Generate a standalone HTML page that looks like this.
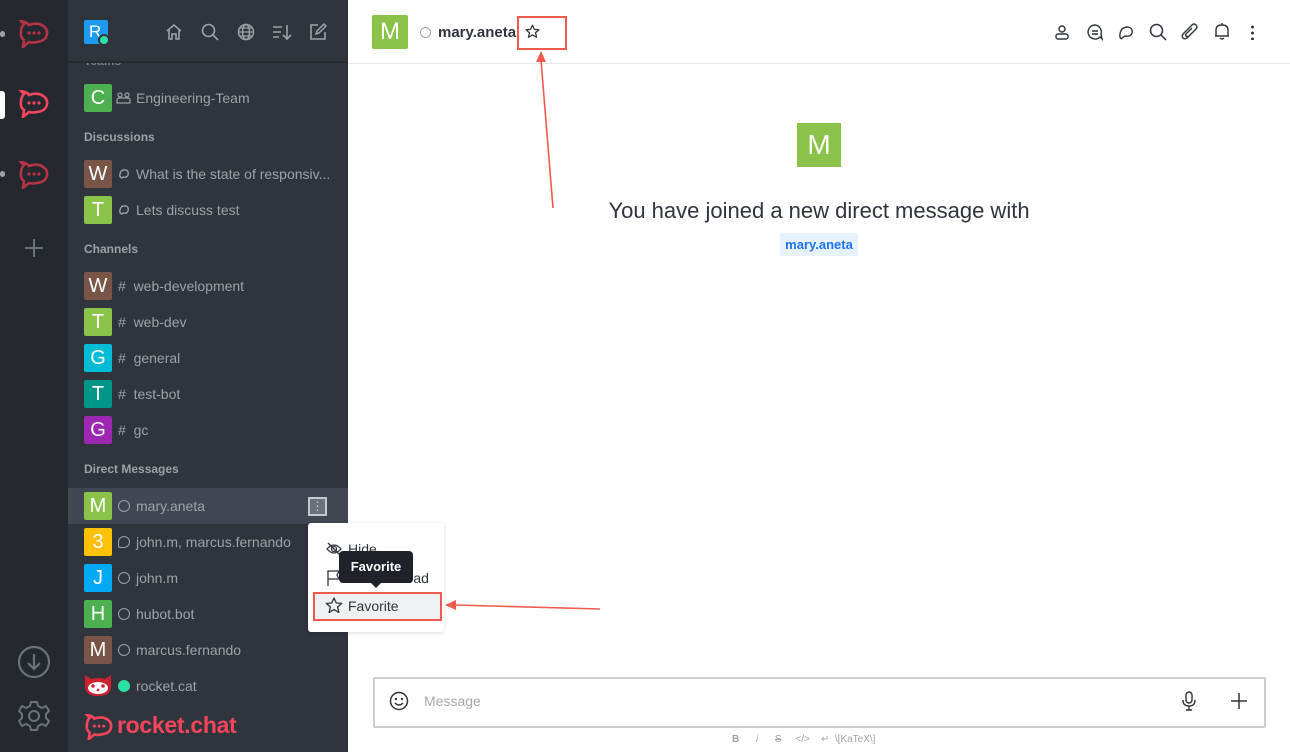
<!DOCTYPE html>
<html><head><meta charset="utf-8"><style>
*{box-sizing:border-box;margin:0;padding:0}
body{width:1290px;height:752px;overflow:hidden;font-family:"Liberation Sans",sans-serif;background:#fff;position:relative}
.a{position:absolute}
#rail{left:0;top:0;width:68px;height:752px;background:#25282f}
#side{left:68px;top:0;width:280px;height:752px;background:#2f343d}
#shead{left:68px;top:0;width:280px;height:63px;background:#2f343d;border-bottom:2px solid #272b31}
.lbl{position:absolute;left:84px;font-size:12px;font-weight:bold;color:#9ea2a8}
.row{position:absolute;left:68px;width:280px;height:36px}
.av{position:absolute;left:16px;top:4px;width:28px;height:28px;border-radius:2px;color:#fff;font-size:20px;text-align:center;line-height:28px}
.nm{position:absolute;left:68px;top:0;line-height:36px;font-size:14px;color:#9ea2a8;white-space:nowrap}
.ic{position:absolute;left:50px;top:12px;width:12px;height:12px}
.circ{border:1.6px solid #9ea2a8;border-radius:50%}
svg{display:block}
</style></head><body>
<div id="rail" class="a"></div>
<div class="a" style="left:0;top:31px;width:5px;height:6px;border-radius:3px;background:#9ea2a8"></div>
<div class="a" style="left:0;top:91px;width:5px;height:28px;border-radius:0 3px 3px 0;background:#fff"></div>
<div class="a" style="left:0;top:171px;width:5px;height:6px;border-radius:3px;background:#9ea2a8"></div>
<svg class="a" style="left:18px;top:20px" width="32" height="28" viewBox="0 0 32 28"><path d="M6 4 L3 1 Q9 2 11 5 Q16 3 21 4 Q30 7 29 14 Q28 21 19 22 Q14 23 11 22 L5 27 L6 20 Q2 17 3 12 Q3 7 6 4Z" fill="none" stroke="#b63345" stroke-width="2.6"/><circle cx="11" cy="13" r="1.6" fill="#b63345"/><circle cx="16" cy="13" r="1.6" fill="#b63345"/><circle cx="21" cy="13" r="1.6" fill="#b63345"/></svg>
<svg class="a" style="left:18px;top:90px" width="32" height="28" viewBox="0 0 32 28"><path d="M6 4 L3 1 Q9 2 11 5 Q16 3 21 4 Q30 7 29 14 Q28 21 19 22 Q14 23 11 22 L5 27 L6 20 Q2 17 3 12 Q3 7 6 4Z" fill="none" stroke="#f5455c" stroke-width="2.6"/><circle cx="11" cy="13" r="1.6" fill="#f5455c"/><circle cx="16" cy="13" r="1.6" fill="#f5455c"/><circle cx="21" cy="13" r="1.6" fill="#f5455c"/></svg>
<svg class="a" style="left:18px;top:161px" width="32" height="28" viewBox="0 0 32 28"><path d="M6 4 L3 1 Q9 2 11 5 Q16 3 21 4 Q30 7 29 14 Q28 21 19 22 Q14 23 11 22 L5 27 L6 20 Q2 17 3 12 Q3 7 6 4Z" fill="none" stroke="#b63345" stroke-width="2.6"/><circle cx="11" cy="13" r="1.6" fill="#b63345"/><circle cx="16" cy="13" r="1.6" fill="#b63345"/><circle cx="21" cy="13" r="1.6" fill="#b63345"/></svg>
<svg class="a" style="left:24px;top:238px" width="20" height="20"><path d="M10 1V19M1 10H19" stroke="#6c727a" stroke-width="2"/></svg>
<svg class="a" style="left:17px;top:645px" width="34" height="34"><circle cx="17" cy="17" r="15" fill="none" stroke="#6c727a" stroke-width="2.2"/><path d="M17 9V24M11 18L17 24L23 18" fill="none" stroke="#6c727a" stroke-width="2.2"/></svg>
<svg class="a" style="left:17px;top:699px" width="34" height="34" viewBox="0 0 34 34"><path d="M14 3H20L21 7L25 9L29 7L32 12L29 15V19L32 22L29 27L25 25L21 27L20 31H14L13 27L9 25L5 27L2 22L5 19V15L2 12L5 7L9 9L13 7Z" fill="none" stroke="#6c727a" stroke-width="2" stroke-linejoin="round"/><circle cx="17" cy="17" r="5" fill="none" stroke="#6c727a" stroke-width="2"/></svg>

<div id="side" class="a"></div>
<div id="shead" class="a"></div>
<div class="a" style="left:68px;top:63px;width:280px;height:4px;overflow:hidden"><div class="lbl" style="left:16px;top:-9px;opacity:.7">Teams</div></div>
<div class="a" style="left:84px;top:20px;width:24px;height:24px;background:#1d9bf0;border-radius:2px;color:#fff;font-size:17px;line-height:24px;padding-left:5px">R</div>
<div class="a" style="left:98px;top:34px;width:12px;height:12px;border-radius:50%;background:#2de0a5;border:2px solid #2f343d"></div>
<svg class="a" style="left:165px;top:23px" width="18" height="18" viewBox="0 0 18 18"><path d="M2 8L9 2L16 8M4 7V16H7V11H11V16H14V7" fill="none" stroke="#9ea2a8" stroke-width="1.6"/></svg>
<svg class="a" style="left:201px;top:23px" width="18" height="18"><circle cx="7.5" cy="7.5" r="6" fill="none" stroke="#9ea2a8" stroke-width="1.6"/><path d="M12 12L17 17" stroke="#9ea2a8" stroke-width="1.6"/></svg>
<svg class="a" style="left:237px;top:23px" width="18" height="18"><circle cx="9" cy="9" r="7.5" fill="none" stroke="#9ea2a8" stroke-width="1.5"/><ellipse cx="9" cy="9" rx="3.5" ry="7.5" fill="none" stroke="#9ea2a8" stroke-width="1.5"/><path d="M1.5 9H16.5M3 5H15M3 13H15" stroke="#9ea2a8" stroke-width="1.3"/></svg>
<svg class="a" style="left:272px;top:24px" width="20" height="17"><path d="M1 3H10M1 8H9M1 13H7M15 1V15M11 11L15 15L19 11" fill="none" stroke="#9ea2a8" stroke-width="1.6"/></svg>
<svg class="a" style="left:309px;top:23px" width="18" height="18"><path d="M9 2H2V16H16V9" fill="none" stroke="#9ea2a8" stroke-width="1.6"/><path d="M7 11L8 8L15 1L17 3L10 10Z" fill="none" stroke="#9ea2a8" stroke-width="1.5"/></svg>

<div class="row" style="top:80px"><div class="av" style="background:#4caf50">C</div><svg class="ic" style="left:48px;width:15px" width="15" height="12"><circle cx="4" cy="3" r="2" fill="none" stroke="#9ea2a8" stroke-width="1.2"/><circle cx="11" cy="3" r="2" fill="none" stroke="#9ea2a8" stroke-width="1.2"/><path d="M1 11V8Q1 6 4 6H11Q14 6 14 8V11Z" fill="none" stroke="#9ea2a8" stroke-width="1.2"/></svg><div class="nm">Engineering-Team</div></div>
<div class="lbl" style="top:130px">Discussions</div>
<div class="row" style="top:156px"><div class="av" style="background:#795548">W</div><svg class="ic" width="12" height="12"><path d="M4 10Q1 9 2 6Q3 1 8 2Q11 3 10 7Q9 10 5 9Z" fill="none" stroke="#9ea2a8" stroke-width="1.3"/></svg><div class="nm">What is the state of responsiv...</div></div>
<div class="row" style="top:192px"><div class="av" style="background:#8bc34a">T</div><svg class="ic" width="12" height="12"><path d="M4 10Q1 9 2 6Q3 1 8 2Q11 3 10 7Q9 10 5 9Z" fill="none" stroke="#9ea2a8" stroke-width="1.3"/></svg><div class="nm">Lets discuss test</div></div>
<div class="lbl" style="top:242px">Channels</div>
<div class="row" style="top:268px"><div class="av" style="background:#795548">W</div><div class="nm" style="left:50px">#&nbsp;&nbsp;web-development</div></div>
<div class="row" style="top:304px"><div class="av" style="background:#8bc34a">T</div><div class="nm" style="left:50px">#&nbsp;&nbsp;web-dev</div></div>
<div class="row" style="top:340px"><div class="av" style="background:#00bcd4">G</div><div class="nm" style="left:50px">#&nbsp;&nbsp;general</div></div>
<div class="row" style="top:376px"><div class="av" style="background:#009688">T</div><div class="nm" style="left:50px">#&nbsp;&nbsp;test-bot</div></div>
<div class="row" style="top:412px"><div class="av" style="background:#9c27b0">G</div><div class="nm" style="left:50px">#&nbsp;&nbsp;gc</div></div>
<div class="lbl" style="top:462px">Direct Messages</div>
<div class="row" style="top:488px;background:#414752"><div class="av" style="background:#8bc34a">M</div><div class="ic circ"></div><div class="nm">mary.aneta</div><div class="a" style="left:240px;top:9px;width:19px;height:19px;border:2px solid #c5c8cc;background:#6b717a;color:#c5c8cc;font-size:12px;text-align:center;line-height:14px">⋮</div></div>
<div class="row" style="top:524px"><div class="av" style="background:#ffc107">3</div><div class="ic circ" style="border-radius:50% 50% 50% 2px"></div><div class="nm">john.m, marcus.fernando</div></div>
<div class="row" style="top:560px"><div class="av" style="background:#03a9f4">J</div><div class="ic circ"></div><div class="nm">john.m</div></div>
<div class="row" style="top:596px"><div class="av" style="background:#4caf50">H</div><div class="ic circ"></div><div class="nm">hubot.bot</div></div>
<div class="row" style="top:632px"><div class="av" style="background:#795548">M</div><div class="ic circ"></div><div class="nm">marcus.fernando</div></div>
<div class="row" style="top:668px"><svg class="a" style="left:16px;top:6px" width="28" height="24"><path d="M1 1L7 5Q14 3 21 5L27 1L27 12Q27 22 14 22Q1 22 1 12Z" fill="#d0202e"/><ellipse cx="14" cy="14" rx="10" ry="6" fill="#fff"/><circle cx="9" cy="12" r="1.8" fill="#d0202e"/><circle cx="19" cy="12" r="1.8" fill="#d0202e"/><circle cx="14" cy="16" r="1.3" fill="#d0202e"/></svg><div class="ic" style="background:#2de0a5;border-radius:50%"></div><div class="nm">rocket.cat</div></div>
<svg class="a" style="left:84px;top:714px" width="30" height="26" viewBox="0 0 32 28"><path d="M6 4 L3 1 Q9 2 11 5 Q16 3 21 4 Q30 7 29 14 Q28 21 19 22 Q14 23 11 22 L5 27 L6 20 Q2 17 3 12 Q3 7 6 4Z" fill="none" stroke="#f5455c" stroke-width="2.8"/><circle cx="11" cy="13" r="1.6" fill="#f5455c"/><circle cx="16" cy="13" r="1.6" fill="#f5455c"/><circle cx="21" cy="13" r="1.6" fill="#f5455c"/></svg>
<div class="a" style="left:117px;top:712px;font-size:23px;font-weight:bold;color:#f5455c;letter-spacing:-.3px">rocket.chat</div>

<div class="a" style="left:308px;top:523px;width:136px;height:109px;background:#fff;border-radius:3px;box-shadow:0 1px 4px rgba(0,0,0,.15)"></div>
<svg class="a" style="left:326px;top:542px" width="16" height="14"><path d="M1 7Q8 -1 15 7Q8 15 1 7Z" fill="none" stroke="#2f343d" stroke-width="1.3"/><circle cx="8" cy="7" r="2.5" fill="none" stroke="#2f343d" stroke-width="1.3"/><path d="M2 1L14 13" stroke="#2f343d" stroke-width="1.3"/></svg>
<div class="a" style="left:348px;top:541px;font-size:14px;color:#2f343d">Hide</div>
<svg class="a" style="left:327px;top:570px" width="14" height="16"><path d="M1 16V1H12L10 5L12 9H1" fill="none" stroke="#2f343d" stroke-width="1.3"/></svg>
<div class="a" style="left:348px;top:570px;font-size:14px;color:#2f343d">Mark Unread</div>
<div class="a" style="left:339px;top:551px;width:74px;height:32px;background:#1f2329;border-radius:4px;color:#fff;font-size:13px;font-weight:bold;text-align:center;line-height:32px">Favorite</div>
<div class="a" style="left:371px;top:583px;width:0;height:0;border-left:5px solid transparent;border-right:5px solid transparent;border-top:5px solid #1f2329"></div>
<div class="a" style="left:313px;top:592px;width:129px;height:29px;background:#eef0f2;border:2px solid #f05a4e"></div>
<svg class="a" style="left:325px;top:597px" width="18" height="17" viewBox="0 0 18 17"><path d="M9 1L11.3 6L16.7 6.4L12.6 10L13.9 15.4L9 12.6L4.1 15.4L5.4 10L1.3 6.4L6.7 6Z" fill="none" stroke="#2f343d" stroke-width="1.3" stroke-linejoin="round"/></svg>
<div class="a" style="left:348px;top:598px;font-size:14px;color:#2f343d">Favorite</div>

<div class="a" style="left:348px;top:63px;width:942px;height:1px;background:#e4e7ea"></div>
<div class="a" style="left:372px;top:15px;width:36px;height:34px;background:#8bc34a;color:#fff;font-size:24px;text-align:center;line-height:34px;border-radius:2px">M</div>
<div class="a" style="left:420px;top:27px;width:11px;height:11px;border:1.6px solid #9ea2a8;border-radius:50%"></div>
<div class="a" style="left:438px;top:24px;font-size:15px;font-weight:bold;color:#2f343d">mary.aneta</div>
<svg class="a" style="left:525px;top:24px" width="15" height="15" viewBox="0 0 18 17"><path d="M9 1L11.3 6L16.7 6.4L12.6 10L13.9 15.4L9 12.6L4.1 15.4L5.4 10L1.3 6.4L6.7 6Z" fill="none" stroke="#2f343d" stroke-width="1.5" stroke-linejoin="round"/></svg>
<div class="a" style="left:517px;top:16px;width:50px;height:34px;border:2px solid #f05a4e"></div>

<svg class="a" style="left:1054px;top:24px" width="16" height="16"><circle cx="8" cy="5" r="3" fill="none" stroke="#2f343d" stroke-width="1.4"/><rect x="2" y="10" width="12" height="5" rx="2" fill="none" stroke="#2f343d" stroke-width="1.4"/></svg>
<svg class="a" style="left:1086px;top:23px" width="18" height="18"><path d="M9 2A7 7 0 1 0 14 14L16 16L15 11A7 7 0 0 0 9 2Z" fill="none" stroke="#2f343d" stroke-width="1.4"/><path d="M6 8H12M6 11H12" stroke="#2f343d" stroke-width="1.4"/></svg>
<svg class="a" style="left:1117px;top:23px" width="18" height="18"><path d="M5 16Q2 15 3 11Q4 4 11 4Q16 5 15 10Q14 14 8 13L4 16" fill="none" stroke="#2f343d" stroke-width="1.4"/></svg>
<svg class="a" style="left:1149px;top:23px" width="18" height="18"><circle cx="7.5" cy="7.5" r="6" fill="none" stroke="#2f343d" stroke-width="1.5"/><path d="M12 12L17 17" stroke="#2f343d" stroke-width="1.5"/></svg>
<svg class="a" style="left:1181px;top:23px" width="18" height="18"><path d="M14 7L7 14Q4 17 2 15Q0 13 3 10L11 2Q13 0 15 2Q17 4 15 6L8 13Q6 14 5 13Q4 12 5 11L11 5" fill="none" stroke="#2f343d" stroke-width="1.4"/></svg>
<svg class="a" style="left:1213px;top:22px" width="18" height="19"><path d="M3 14V8Q3 3 9 3Q15 3 15 8V14H2H16M9 1V3M7 16Q9 18 11 16" fill="none" stroke="#2f343d" stroke-width="1.4"/></svg>
<div class="a" style="left:1251px;top:24px;width:3px;height:16px;background:radial-gradient(circle,#2f343d 1.3px,transparent 1.6px) 0 0/3px 6px"></div>

<svg class="a" style="left:0;top:0" width="1290" height="752"><path d="M553 208L541 60" stroke="#f05a4e" stroke-width="1.6"/><path d="M536 62L541 51L546 62Z" fill="#f05a4e"/><path d="M600 609L455 605" stroke="#f05a4e" stroke-width="1.6"/><path d="M456 600L445 605L456 610Z" fill="#f05a4e"/></svg>

<div class="a" style="left:797px;top:123px;width:44px;height:44px;background:#8bc34a;color:#fff;font-size:28px;text-align:center;line-height:44px">M</div>
<div class="a" style="left:348px;width:942px;top:198px;text-align:center;font-size:22px;color:#2f343d">You have joined a new direct message with</div>
<div class="a" style="left:780px;top:233px;width:78px;height:23px;background:#e8f2ff;border-radius:2px;color:#1d74f5;font-size:13px;font-weight:bold;text-align:center;line-height:23px">mary.aneta</div>

<div class="a" style="left:373px;top:677px;width:893px;height:51px;border:2px solid #cbced1;border-radius:2px"></div>
<svg class="a" style="left:389px;top:691px" width="20" height="20"><circle cx="10" cy="10" r="8.5" fill="none" stroke="#2f343d" stroke-width="1.5"/><circle cx="7" cy="8" r="1.2" fill="#2f343d"/><circle cx="13" cy="8" r="1.2" fill="#2f343d"/><path d="M6 12Q10 16 14 12" fill="none" stroke="#2f343d" stroke-width="1.5"/></svg>
<div class="a" style="left:424px;top:693px;font-size:14px;color:#a5a9ae">Message</div>
<svg class="a" style="left:1181px;top:691px" width="16" height="20"><rect x="5" y="1" width="6" height="11" rx="3" fill="none" stroke="#2f343d" stroke-width="1.4"/><path d="M2 9Q2 15 8 15Q14 15 14 9M8 15V19M5 19H11" fill="none" stroke="#2f343d" stroke-width="1.4"/></svg>
<svg class="a" style="left:1230px;top:692px" width="18" height="18"><path d="M9 1V17M1 9H17" stroke="#2f343d" stroke-width="1.5"/></svg>
<div class="a" style="left:732px;top:734px;font-size:10px;color:#9ea2a8;white-space:nowrap"><b>B</b>&nbsp;&nbsp;&nbsp;&nbsp;&nbsp;&nbsp;<i>i</i>&nbsp;&nbsp;&nbsp;&nbsp;&nbsp;&nbsp;<s>S</s>&nbsp;&nbsp;&nbsp;&nbsp;&nbsp;&lt;/&gt;&nbsp;&nbsp;&nbsp;&nbsp;↵&nbsp;&nbsp;\[KaTeX\]</div>
</body></html>
